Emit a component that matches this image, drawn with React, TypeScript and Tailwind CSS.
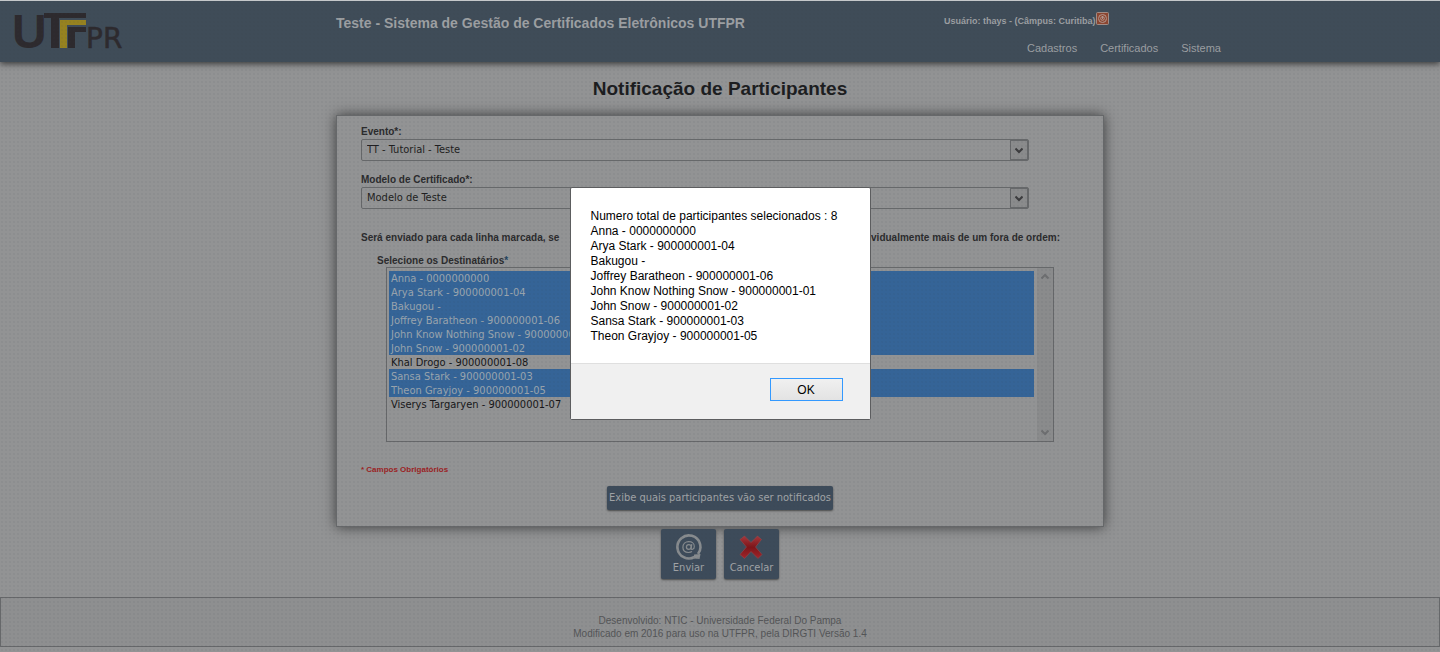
import { useState } from "react";
import clsx from "clsx";

const EVENTS = ["TT - Tutorial - Teste"];
const TEMPLATES = ["Modelo de Teste"];

const PEOPLE = [
  { name: "Anna", code: "0000000000" },
  { name: "Arya Stark", code: "900000001-04" },
  { name: "Bakugou", code: "" },
  { name: "Joffrey Baratheon", code: "900000001-06" },
  { name: "John Know Nothing Snow", code: "900000001-01" },
  { name: "John Snow", code: "900000001-02" },
  { name: "Khal Drogo", code: "900000001-08" },
  { name: "Sansa Stark", code: "900000001-03" },
  { name: "Theon Grayjoy", code: "900000001-05" },
  { name: "Viserys Targaryen", code: "900000001-07" },
];

const INITIAL = PEOPLE.filter((p) => p.name !== "Khal Drogo" && p.name !== "Viserys Targaryen").map((p) => p.name);

const tahoma = "font-['DejaVu_Sans_Condensed','Noto_Sans',sans-serif]";
const darkButton = "rounded-xs bg-[#3d4b5a] text-[#a0a3a6] shadow-[0_1px_2px_rgba(0,0,0,0.5)]";

const Logo = () => (
  <svg width="126" height="60" viewBox="-7 -11 126 60" role="img" aria-label="UTFPR">
    <text x="-3" y="36" fontSize="48" fontWeight="700" fill="#2d2a2e" fontFamily="Liberation Sans, sans-serif">
      U
    </text>
    <path d="M29 1h42v5H44v30h-8V6h-7z" fill="#2d2a2e" />
    <path d="M45 8h26v5H52v23h-7z" fill="#968220" />
    <path d="M53 15h18v5H60v16h-7z" fill="#2d2a2e" />
    <text x="71" y="36" fontSize="28" fill="#2d2a2e" stroke="#2d2a2e" strokeWidth="0.500" fontFamily="DejaVu Sans, sans-serif">
      PR
    </text>
  </svg>
);

const PowerIcon = () => (
  <svg width="13" height="13" viewBox="0 0 13 13">
    <rect x="0.5" y="0.5" width="12" height="12" rx="1" fill="#8e4630" stroke="#a08c86" />
    <circle cx="6.5" cy="6.5" r="4" fill="none" stroke="#b39a92" />
    <circle cx="6.5" cy="6.5" r="1.8" fill="none" stroke="#b39a92" />
    <path d="M6.5 4v3" stroke="#b39a92" />
  </svg>
);

const MailIcon = () => (
  <svg width="28" height="28" viewBox="0 0 28 28" fill="none" stroke="#878b8e">
    <path d="M23 21A11.500 11.500 0 1 0 19.500 24" strokeWidth="2.600" />
    <path d="M19 21.500l6.500-0.500-1 5-5.500-0.500z" fill="#878b8e" stroke="none" />
    <circle cx="13.800" cy="14" r="2.400" strokeWidth="1.300" />
    <path
      d="M16.800 11.200l-0.700 4.200c-0.200 1.800 3.200 1.300 3.200-2 0-2.900-2.400-4.800-5.400-4.800-3.600 0-6 2.500-6 5.700 0 3.200 2.200 5.200 5.600 5.200 1.400 0 2.600-0.300 3.500-0.900"
      strokeWidth="1.200"
    />
  </svg>
);

const CancelIcon = () => (
  <svg width="28" height="28" viewBox="0 0 28 28">
    <defs>
      <linearGradient id="cancel-red" x1="0" y1="0" x2="0" y2="1">
        <stop offset="0" stopColor="#a8373c" />
        <stop offset="0.5" stopColor="#7d1519" />
        <stop offset="1" stopColor="#a3242a" />
      </linearGradient>
    </defs>
    <path
      d="M6.500 3L13 9.500L19.500 3l4 3.500-6 7.500 6.500 7.500-4 4L13 18.500 6.500 25.500l-4.500-4L8.500 14 2 6.500z"
      fill="url(#cancel-red)"
      stroke="#94484c"
      strokeWidth="0.600"
    />
  </svg>
);

const Chevron = ({ up = false, color }: { up?: boolean; color: string }) => (
  <svg width="8" height="7" viewBox="0 0 8 7" fill="none" stroke={color} strokeWidth="2">
    <path d={up ? "M0.500 5.500L4 2l3.500 3.500" : "M0.500 1.500L4 5l3.500-3.500"} />
  </svg>
);

const SelectField = ({ id, label, options }: { id: string; label: string; options: string[] }) => (
  <div>
    <label htmlFor={id} className="block text-[10px] leading-3 font-bold text-[#2b2b2d]">
      {label}
    </label>
    <div className="mt-px flex h-[22px] rounded-xs border border-[#66686a]">
      <select id={id} className={clsx("min-w-0 flex-1 appearance-none px-[5px] text-[11px] text-[#1e1e20] outline-none", tahoma)}>
        {options.map((option) => (
          <option key={option}>{option}</option>
        ))}
      </select>
      <span className="pointer-events-none flex w-[18px] items-center justify-center border border-[#66686a] bg-[#8a8b8c]">
        <Chevron color="#3c3c3e" />
      </span>
    </div>
  </div>
);

export default function App() {
  const [selected, setSelected] = useState<string[]>(INITIAL);
  const [open, setOpen] = useState(true);
  const chosen = PEOPLE.filter((p) => selected.includes(p.name));

  return (
    <div className="min-h-screen bg-[#929394] font-['Liberation_Sans',Arial,sans-serif]">
      <header className="grid h-[62px] grid-cols-[1fr_608px_496px] border-t border-[#c5c8ca] bg-[#3f4c58] text-[#9c9fa2] shadow-[0_2px_6px_rgba(0,0,0,0.6)]">
        <div className="pl-2">
          <Logo />
        </div>
        <div className="pt-3 text-[14px] leading-5 font-bold">Teste - Sistema de Gestão de Certificados Eletrônicos UTFPR</div>
        <div>
          <div className="flex items-start pt-[11px] text-[9px] leading-[13px] font-bold">
            <span className="pt-[3px]">Usuário: thays - (Câmpus: Curitiba)</span>
            <button type="button" aria-label="Sair">
              <PowerIcon />
            </button>
          </div>
          <nav className="flex gap-[23px] pt-3 pl-[83px] text-[11px] leading-4">
            <a href="#cadastros">Cadastros</a>
            <a href="#certificados">Certificados</a>
            <a href="#sistema">Sistema</a>
          </nav>
        </div>
      </header>

      <main className="flex flex-col items-center">
        <h1 className="pt-[15px] pb-[14px] text-[19px] leading-6 font-bold text-[#1c1d1f]">Notificação de Participantes</h1>

        <form className="w-full max-w-3xl border border-[#66686a] px-6 pt-[10px] pb-4 shadow-[0_0_12px_rgba(0,0,0,0.6)]">
          <div className="flex w-[668px] flex-col gap-[13px]">
            <SelectField id="evento" label="Evento*:" options={EVENTS} />
            <SelectField id="modelo" label="Modelo de Certificado*:" options={TEMPLATES} />
          </div>

          <p className="mt-[23px] flex w-[699px] justify-between text-[10px] leading-3 font-bold text-[#2b2b2d]">
            <span>Será enviado para cada linha marcada, se</span>
            <span>individualmente mais de um fora de ordem:</span>
          </p>

          <label htmlFor="destinatarios" className="mt-[11px] block pl-4 text-[10px] leading-3 font-bold text-[#2b2b2d]">
            Selecione os Destinatários<span className="text-[#24445f]">*</span>
          </label>
          <div className="ml-[25px] flex h-[175px] w-[668px] border border-[#66686a]">
            <select
              id="destinatarios"
              multiple
              value={selected}
              onChange={(e) => setSelected(Array.from(e.target.selectedOptions, (o) => o.value))}
              className={clsx("min-w-0 flex-1 overflow-hidden py-[3px] pr-[3px] pl-[2px] text-[11px] text-[#161618] outline-none", tahoma)}
            >
              {PEOPLE.map((p) => (
                <option
                  key={p.name}
                  value={p.name}
                  className="h-[14px] min-h-[14px] px-[2px] pt-px pb-0 leading-[14px] checked:bg-linear-to-r checked:from-[#356497] checked:to-[#356497] checked:text-[#9aa4ae]"
                >
                  {p.name} - {p.code}
                </option>
              ))}
            </select>
            <div className="flex w-4 flex-col items-center justify-between bg-[#8a8b8c] py-[5px]">
              <Chevron up color="#6d6e70" />
              <Chevron color="#6d6e70" />
            </div>
          </div>

          <p className="mt-[22px] text-[8px] leading-3 font-bold text-[#9b1f24]">* Campos Obrigatórios</p>
          <div className="mt-[10px] flex justify-center">
            <button type="button" onClick={() => setOpen(true)} className={clsx("h-6 px-[2px] text-[11px]", darkButton, tahoma)}>
              Exibe quais participantes vão ser notificados
            </button>
          </div>
        </form>

        <div className="flex gap-2 pt-[2px]">
          <button type="button" className={clsx("flex h-[50px] w-[55px] flex-col items-center pt-1 text-[11px] leading-[13px]", darkButton, tahoma)}>
            <MailIcon />
            Enviar
          </button>
          <button type="button" className={clsx("flex h-[50px] w-[55px] flex-col items-center pt-1 text-[11px] leading-[13px]", darkButton, tahoma)}>
            <CancelIcon />
            Cancelar
          </button>
        </div>
      </main>

      <footer className="mt-[18px] border border-[#66686a] bg-[#8e8f90] pt-4 pb-[6px] text-center text-[10px] leading-[13px] text-[#545557]">
        <p>Desenvolvido: NTIC - Universidade Federal Do Pampa</p>
        <p>Modificado em 2016 para uso na UTFPR, pela DIRGTI Versão 1.4</p>
      </footer>

      {open && (
        <div className="fixed inset-0 flex items-start justify-center bg-[radial-gradient(rgba(60,68,80,0.06)_1px,transparent_1px)] bg-size-[4px_4px] pt-[187px]">
          <div role="alertdialog" aria-modal="true" aria-labelledby="resumo" className="w-[301px] rounded-xs border border-[#5c5d5f] bg-white">
            <div id="resumo" className="px-5 pt-[21px] pb-[19px] text-[12px] leading-[15px] whitespace-nowrap text-black">
              <p>Numero total de participantes selecionados : {chosen.length}</p>
              {chosen.map((p) => (
                <p key={p.name}>
                  {p.name} - {p.code}
                </p>
              ))}
            </div>
            <div className="flex justify-end border-t border-[#dfdfdf] bg-[#f0f0f0] pt-[14px] pr-[27px] pb-[18px]">
              <button
                type="button"
                onClick={() => setOpen(false)}
                className="h-[23px] w-[73px] border border-[#3399ff] bg-linear-to-b from-[#f0f0f0] to-[#e3e3e3] text-[12px] text-black"
              >
                OK
              </button>
            </div>
          </div>
        </div>
      )}
    </div>
  );
}
